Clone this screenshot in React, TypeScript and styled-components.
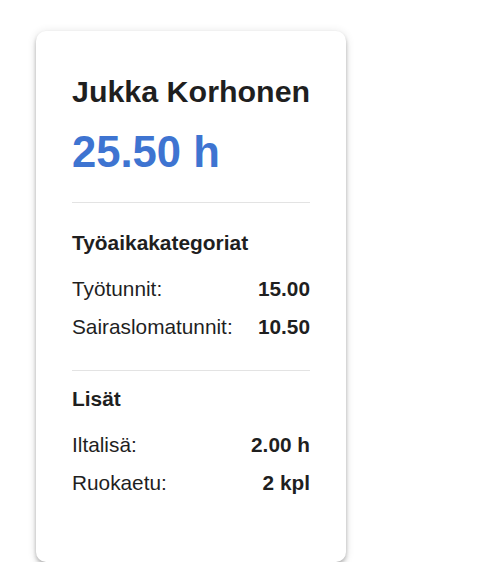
import styled, { createGlobalStyle } from 'styled-components';

const GlobalStyle = createGlobalStyle`
  html, body {
    margin: 0;
    background: #ffffff;
  }

  body {
    font-family: "Liberation Sans", Arial, sans-serif;
    color: #1f1f1f;
  }
`;

const Page = styled.div`
  padding: 31px 0 0 36px;
`;

const Card = styled.div`
  box-sizing: border-box;
  width: 310px;
  padding: 42px 36px 60px;
  background: #ffffff;
  border-radius: 10px;
  box-shadow: 0 2px 4px -1px rgba(0, 0, 0, 0.2), 0 4px 5px 0 rgba(0, 0, 0, 0.14),
    0 1px 10px 0 rgba(0, 0, 0, 0.12);
`;

const Name = styled.h2`
  margin: 0;
  font-size: 30.4px;
  line-height: 36px;
  font-weight: 700;
  white-space: nowrap;
  color: #1f1f1f;
`;

const Total = styled.div`
  margin-top: 18px;
  font-size: 43.6px;
  line-height: 50px;
  font-weight: 700;
  white-space: nowrap;
  color: #3e74d1;
`;

const Divider = styled.hr<{ $gap: number }>`
  margin: ${(p) => p.$gap}px 0 0;
  border: none;
  height: 1px;
  background: #e3e3e3;
`;

const Section = styled.section<{ $top: number }>`
  padding-top: ${(p) => p.$top}px;
`;

const SectionTitle = styled.h3`
  margin: 0 0 13px;
  font-size: 20.9px;
  line-height: 28px;
  font-weight: 700;
  color: #1f1f1f;
`;

const Row = styled.div`
  display: flex;
  justify-content: space-between;
  align-items: baseline;
  padding: 5px 0;
  font-size: 20.8px;
  line-height: 28px;
  white-space: nowrap;
`;

const Label = styled.span`
  color: #1f1f1f;
`;

const Value = styled.span`
  font-weight: 700;
  color: #1f1f1f;
`;

type Item = { label: string; value: string };

const categories: Item[] = [
  { label: 'Työtunnit:', value: '15.00' },
  { label: 'Sairaslomatunnit:', value: '10.50' },
];

const extras: Item[] = [
  { label: 'Iltalisä:', value: '2.00 h' },
  { label: 'Ruokaetu:', value: '2 kpl' },
];

function Rows({ items }: { items: Item[] }) {
  return (
    <>
      {items.map((item) => (
        <Row key={item.label}>
          <Label>{item.label}</Label>
          <Value>{item.value}</Value>
        </Row>
      ))}
    </>
  );
}

export default function App() {
  return (
    <>
      <GlobalStyle />
      <Page>
        <Card>
          <Name>Jukka Korhonen</Name>
          <Total>25.50 h</Total>
          <Divider $gap={25} />
          <Section $top={26}>
            <SectionTitle>Työaikakategoriat</SectionTitle>
            <Rows items={categories} />
          </Section>
          <Divider $gap={24} />
          <Section $top={14}>
            <SectionTitle>Lisät</SectionTitle>
            <Rows items={extras} />
          </Section>
        </Card>
      </Page>
    </>
  );
}
